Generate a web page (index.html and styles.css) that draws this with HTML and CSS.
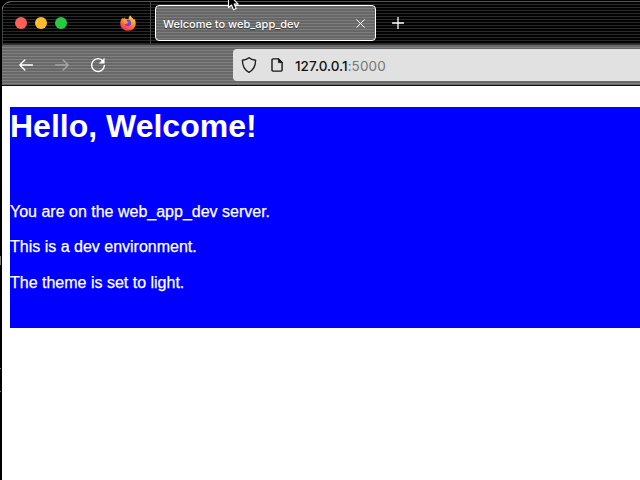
FILE: index.html
```html
<!DOCTYPE html>
<html lang="en">
<head>
<meta charset="utf-8">
<title>Welcome to web_app_dev</title>
<link rel="stylesheet" href="styles.css">
</head>
<body>
<div class="desktop">
  <i class="mark mark-a"></i><i class="mark mark-b"></i><i class="mark mark-c"></i>
  <div class="window">
    <div class="tabbar">
      <div class="lights"><span class="light red"></span><span class="light amber"></span><span class="light green"></span></div>
      <svg class="fox" viewBox="0 0 16 16">
        <defs><linearGradient id="fire" x1=".8" y1="0" x2=".3" y2="1"><stop offset="0" stop-color="#ffe24a"/><stop offset=".5" stop-color="#ff8a2a"/><stop offset="1" stop-color="#f5285a"/></linearGradient></defs>
        <path fill="url(#fire)" d="M10 .2c1 1 1.300 2 2.600 3 .6.500 1 1 1.200 1.700l.3-1.500c1.200 1.700 1.700 3.500 1.600 5.300-.2 4.200-3.500 7-7.700 7-4.300 0-7.700-3-7.700-7.300 0-2.400.8-4.200 2.200-5.700l.7 1.500 1-1.900.8 1.500c1.300-.2 2.400.1 3.300.6C8.500 3 9.200 1.500 10 .2z"/>
        <path fill="#7542e5" d="M7.300 4.700c2.200-.6 3.800 1 3.800 3.200 0 2-1.400 3.400-3.300 3.400S4.700 10 4.800 8.500c.6.500 1.400.3 2.300-.2 1-.7.900-1.200-.3-1.400-.8-.2-.5-1.400.5-2.200z"/>
        <path fill="#ff9838" d="M2.300 4.200c1.500-.7 3.500-.5 5 .4-.8.600-1 1.300-.6 1.900.9.200 1.900.3 1.700.9-.8.800-2 .8-2.700 1.700-1.200 0-2.200-2-3.400-4.900z"/>
      </svg>
      <div class="separator"></div>
      <div class="tab">
        <span class="tab-title">Welcome to web_app_dev</span>
        <svg class="close" viewBox="0 0 9 9"><path d="M.7.700l7.600 7.600M8.300.7L.7 8.300"/></svg>
      </div>
      <svg class="plus" viewBox="0 0 12 12"><path d="M6 .3v11.400M.3 6h11.400"/></svg>
    </div>
    <div class="toolbar">
      <svg class="tool back" viewBox="0 0 16 16"><path d="M14.500 8H1.800M6.800 3L1.800 8l5 5"/></svg>
      <svg class="tool forward" viewBox="0 0 16 16"><path d="M1.500 8h12.700M9.200 3l5 5-5 5"/></svg>
      <svg class="tool reload" viewBox="0 0 16 16"><path d="M13 4A6.400 6.400 0 1 0 14.400 8.500"/><path class="solid" d="M14.300 1.500v4.800H9.500z"/></svg>
      <div class="address">
        <svg class="shield" viewBox="0 0 16 16"><path d="M8 .8C6.300 2.200 4 3 1.400 3.300c0 5.400 1.600 9.500 6.600 12 5-2.500 6.600-6.600 6.600-12C12 3 9.700 2.200 8 .8z"/></svg>
        <svg class="page-icon" viewBox="0 0 12 14"><path d="M2 .9h5.500l3.600 3.600v7.600q0 1-1 1H2q-1 0-1-1V1.900q0-1 1-1z"/><path class="fold" d="M7.300.8v3.900h3.900z"/></svg>
        <span class="url">127.0.0.1<span class="port">:5000</span></span>
      </div>
    </div>
    <main class="page">
      <section class="welcome">
        <h1>Hello, Welcome!</h1>
        <p>You are on the web_app_dev server.</p>
        <p>This is a dev environment.</p>
        <p>The theme is set to light.</p>
      </section>
    </main>
  </div>
  <svg class="cursor" viewBox="0 0 14 11"><path d="M2.500-6v13.500l3-2.500 2 4.800 2.700-1.200-2-4.500h4z"/></svg>
</div>
</body>
</html>
```
FILE: styles.css
```css
* { box-sizing: border-box; }
body { margin: 0; overflow: hidden; font-family: "Liberation Sans", Arial, sans-serif; }
svg { display: block; flex: none; fill: none; stroke-linecap: round; stroke-linejoin: round; }
.desktop { position: relative; width: 640px; height: 480px; padding: 1px 0 0 2px; background: #000; overflow: hidden; }
.mark { position: absolute; left: 0; width: 1px; height: 1px; background: #777; }
.mark-a { top: 256px; height: 9px; }
.mark-b { top: 368px; }
.mark-c { top: 391px; }
.cursor { position: absolute; left: 226px; top: 0; width: 14px; height: 11px; fill: #000; stroke: #fff; stroke-width: 1.1; }
.window { height: 479px; border-top: 1px solid #555; border-top-left-radius: 9px; overflow: hidden; background: #fff; }
.tabbar { display: flex; align-items: center; height: 42px; padding-left: 12px; border-left: 1px solid #444; border-top-left-radius: 8px; background: repeating-linear-gradient(#020202 0 2px, #292929 2px 3px); }
.lights { display: flex; gap: 8px; }
.light { width: 12px; height: 12px; border-radius: 50%; }
.red { background: #ff5f57; }
.amber { background: #febc2e; }
.green { background: #28c840; }
.fox { width: 16px; height: 16px; margin-left: 53px; stroke: none; }
.separator { width: 1px; height: 42px; margin-left: 14px; background: #484848; }
.tab { display: flex; align-items: center; justify-content: space-between; width: 221px; height: 36px; margin-left: 4px; padding: 0 10px 0 7px; border: 1px solid #fff; border-radius: 4px; background: repeating-linear-gradient(#666 0 2px, #7d7d7d 2px 3px); }
.tab-title { padding-top: 1px; font: 500 11px/16px Inter, sans-serif; color: #fff; white-space: nowrap; text-shadow: 0 1px 1px #333; }
.close { width: 9px; height: 9px; stroke: #fff; }
.plus { width: 12px; height: 12px; margin-left: 16px; stroke: #fff; stroke-width: 1.3; }
.toolbar { display: flex; align-items: center; height: 42px; padding-left: 16px; border-top: 1px solid #333; border-bottom: 1px solid #111; background: repeating-linear-gradient(#686868 0 2px, #818181 2px 3px); }
.tool { width: 16px; height: 16px; stroke: #fff; stroke-width: 1.4; }
.forward { margin-left: 20px; stroke: #a5a5a5; }
.reload { margin-left: 20px; }
.solid { fill: #fff; stroke: #fff; stroke-width: .5; }
.address { display: flex; align-items: center; flex: 1; height: 32px; margin-left: 127px; padding-left: 8px; border-radius: 4px 0 0 4px; background: #e1e1e1; }
.shield { width: 16px; height: 16px; stroke: #202020; stroke-width: 1.4; }
.page-icon { width: 12px; height: 14px; margin-left: 14px; stroke: #151515; stroke-width: 1.4; }
.fold { fill: #151515; stroke-width: .5; }
.url { padding-top: 1px; margin-left: 12px; font: 500 13.500px/20px Inter, sans-serif; color: #111; white-space: nowrap; }
.port { font-weight: 400; letter-spacing: .1px; color: #777; }
.page { padding: 21px 0 0 8px; }
.welcome { height: 221px; padding-top: 1px; background: #00f; color: #fff; }
h1 { margin: 0 0 58px; font-size: 32px; line-height: 37px; }
p { margin: 0 0 17.400px; font-size: 16px; line-height: 18px; -webkit-text-stroke: .25px #fff; }
p:nth-of-type(2) { margin-bottom: 18px; }
p:nth-of-type(1) { margin-bottom: 17px; }
```
